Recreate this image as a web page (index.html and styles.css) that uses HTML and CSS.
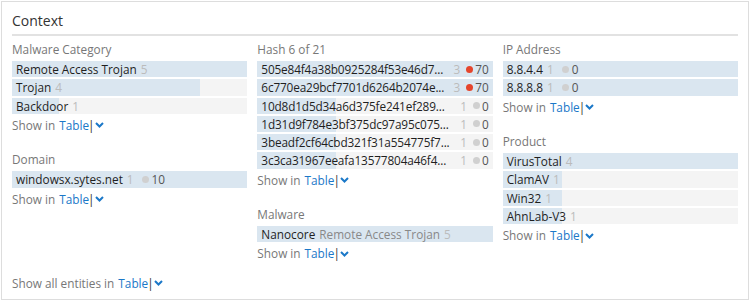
FILE: index.html
```html
<!DOCTYPE html>
<html>

<head>
    <meta charset="utf-8">
    <link rel="stylesheet" href="styles.css">
</head>

<body>
    <div class="panel">
        <div class="panel-head">Context</div>

        <div class="cols">
            <div class="col">
                <div class="section">
                    <div class="sec-title">Malware Category</div>
                    <div class="bar" style="--w: 100%"><span class="name">Remote Access Trojan</span> <span class="count">5</span></div>
                    <div class="bar" style="--w: 80%"><span class="name">Trojan</span> <span class="count">4</span></div>
                    <div class="bar" style="--w: 20%"><span class="name">Backdoor</span> <span class="count">1</span></div>
                    <div class="show">Show in <a href="#">Table</a><span class="pipe">|</span><svg class="chev" width="9" height="6" viewBox="0 0 9 6"><polyline points="1,1 4.5,4.5 8,1" /></svg></div>
                </div>
                <div class="section">
                    <div class="sec-title">Domain</div>
                    <div class="bar" style="--w: 100%"><span class="name">windowsx.sytes.net</span> <span class="count">1</span><span class="dot grey"></span><span class="score">10</span></div>
                    <div class="show">Show in <a href="#">Table</a><span class="pipe">|</span><svg class="chev" width="9" height="6" viewBox="0 0 9 6"><polyline points="1,1 4.5,4.5 8,1" /></svg></div>
                </div>
            </div>

            <div class="col">
                <div class="section">
                    <div class="sec-title">Hash 6 of 21</div>
                    <div class="bar hash" style="--w: 100%"><span class="hname">505e84f4a38b0925284f53e46d7...</span><span class="right"><span class="count">3</span><span class="dot red"></span><span class="score">70</span></span></div>
                    <div class="bar hash" style="--w: 100%"><span class="hname">6c770ea29bcf7701d6264b2074e...</span><span class="right"><span class="count">3</span><span class="dot red"></span><span class="score">70</span></span></div>
                    <div class="bar hash" style="--w: 33.3%"><span class="hname">10d8d1d5d34a6d375fe241ef289...</span><span class="right"><span class="count">1</span><span class="dot grey"></span><span class="score">0</span></span></div>
                    <div class="bar hash" style="--w: 33.3%"><span class="hname">1d31d9f784e3bf375dc97a95c075...</span><span class="right"><span class="count">1</span><span class="dot grey"></span><span class="score">0</span></span></div>
                    <div class="bar hash" style="--w: 33.3%"><span class="hname">3beadf2cf64cbd321f31a554775f7...</span><span class="right"><span class="count">1</span><span class="dot grey"></span><span class="score">0</span></span></div>
                    <div class="bar hash" style="--w: 33.3%"><span class="hname">3c3ca31967eeafa13577804a46f4...</span><span class="right"><span class="count">1</span><span class="dot grey"></span><span class="score">0</span></span></div>
                    <div class="show">Show in <a href="#">Table</a><span class="pipe">|</span><svg class="chev" width="9" height="6" viewBox="0 0 9 6"><polyline points="1,1 4.5,4.5 8,1" /></svg></div>
                </div>
                <div class="section">
                    <div class="sec-title">Malware</div>
                    <div class="bar" style="--w: 100%"><span class="name">Nanocore</span> <span class="sub">Remote Access Trojan</span> <span class="count">5</span></div>
                    <div class="show">Show in <a href="#">Table</a><span class="pipe">|</span><svg class="chev" width="9" height="6" viewBox="0 0 9 6"><polyline points="1,1 4.5,4.5 8,1" /></svg></div>
                </div>
            </div>

            <div class="col">
                <div class="section">
                    <div class="sec-title">IP Address</div>
                    <div class="bar" style="--w: 100%"><span class="name">8.8.4.4</span> <span class="count">1</span><span class="dot grey"></span><span class="score">0</span></div>
                    <div class="bar" style="--w: 100%"><span class="name">8.8.8.8</span> <span class="count">1</span><span class="dot grey"></span><span class="score">0</span></div>
                    <div class="show">Show in <a href="#">Table</a><span class="pipe">|</span><svg class="chev" width="9" height="6" viewBox="0 0 9 6"><polyline points="1,1 4.5,4.5 8,1" /></svg></div>
                </div>
                <div class="section">
                    <div class="sec-title">Product</div>
                    <div class="bar" style="--w: 100%"><span class="name">VirusTotal</span> <span class="count">4</span></div>
                    <div class="bar" style="--w: 25%"><span class="name">ClamAV</span> <span class="count">1</span></div>
                    <div class="bar" style="--w: 25%"><span class="name">Win32</span> <span class="count">1</span></div>
                    <div class="bar" style="--w: 25%"><span class="name">AhnLab-V3</span> <span class="count">1</span></div>
                    <div class="show">Show in <a href="#">Table</a><span class="pipe">|</span><svg class="chev" width="9" height="6" viewBox="0 0 9 6"><polyline points="1,1 4.5,4.5 8,1" /></svg></div>
                </div>
            </div>
        </div>

        <div class="show show-all">Show all entities in <a href="#">Table</a><span class="pipe">|</span><svg class="chev" width="9" height="6" viewBox="0 0 9 6"><polyline points="1,1 4.5,4.5 8,1" /></svg></div>
    </div>
</body>

</html>
```

FILE: styles.css
```css
body {
    margin: 1px;
    background-color: #fff;
    font-family: "Open Sans", "Liberation Sans", sans-serif;
    color: #333;
}

.panel {
    border: 1px solid #dddddd;
    padding: 0 10px;
    box-sizing: border-box;
    height: 299px;
}

.panel-head {
    font-size: 14px;
    line-height: 20px;
    padding: 9px 0 3px 0;
    border-bottom: 2px solid #e2e2e2;
    color: #333;
}

.cols {
    display: grid;
    grid-template-columns: minmax(0, 1fr) minmax(0, 1fr) minmax(0, 1fr);
    column-gap: 10px;
    padding-top: 4px;
}

.section {
    margin-bottom: 15.5px;
}

.sec-title {
    font-size: 11.8px;
    line-height: 18px;
    color: #777;
    margin-bottom: 3px;
}

.bar {
    display: flex;
    align-items: center;
    height: 16.25px;
    line-height: 16.25px;
    margin-bottom: 2px;
    padding: 0 4px;
    font-size: 11.8px;
    white-space: nowrap;
    background: linear-gradient(90deg, #dae6f0 var(--w), #f4f4f4 var(--w));
}

.bar .name {
    color: #1f1f1f;
}

.bar .sub {
    color: #888;
    margin-left: 4px;
}

.count {
    color: #bbb;
    margin-left: 4px;
}

.dot {
    display: inline-block;
    flex: none;
    width: 7px;
    height: 7px;
    border-radius: 50%;
    margin: 0 3px 0 8px;
}

.dot.grey {
    background-color: #d0d0d0;
}

.dot.red {
    background-color: #e5452c;
}

.score {
    color: #555;
}

.hash .hname {
    flex: 1;
    min-width: 0;
    overflow: hidden;
    text-overflow: ellipsis;
    letter-spacing: -0.15px;
    color: #1f1f1f;
}

.hash .right {
    flex: none;
    width: 36px;
    display: flex;
    align-items: center;
    justify-content: flex-end;
    margin-left: 2px;
}

.hash .count {
    margin-left: 0;
}

.hash .dot {
    margin-left: 6px;
    margin-right: 2px;
}

.show {
    font-size: 11.8px;
    line-height: 19px;
    color: #777;
    display: flex;
    align-items: center;
}

.show a {
    color: #1b78c8;
    text-decoration: none;
    margin-left: 4px;
}

.pipe {
    color: #333;
    margin-left: -1px;
}

.chev polyline {
    fill: none;
    stroke: #1b78c8;
    stroke-width: 2;
}

.show-all {
    margin-top: -5px;
}
```
